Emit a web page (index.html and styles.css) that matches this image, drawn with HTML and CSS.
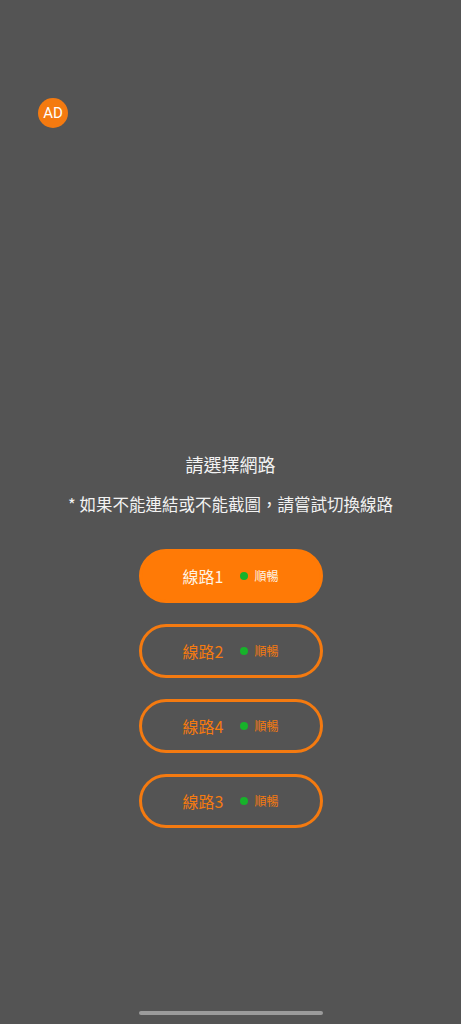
FILE: index.html
```html
<!DOCTYPE html>
<html lang="zh-Hant">
<head>
<meta charset="utf-8">
<title>請選擇網路</title>
<link rel="stylesheet" href="styles.css">
</head>
<body>
<div class="page">
  <header class="top">
    <div class="avatar">AD</div>
  </header>
  <main class="content">
    <h1 class="title">請選擇網路</h1>
    <p class="hint">* 如果不能連結或不能截圖，請嘗試切換線路</p>
    <div class="lines">
      <button class="line active"><span class="name">線路1</span><span class="dot"></span><span class="status">順暢</span></button>
      <button class="line"><span class="name">線路2</span><span class="dot"></span><span class="status">順暢</span></button>
      <button class="line"><span class="name">線路4</span><span class="dot"></span><span class="status">順暢</span></button>
      <button class="line"><span class="name">線路3</span><span class="dot"></span><span class="status">順暢</span></button>
    </div>
  </main>
  <footer class="bottom">
    <div class="home-bar"></div>
  </footer>
</div>
</body>
</html>
```
FILE: styles.css
```css
html, body {
  margin: 0;
  padding: 0;
  background: #545454;
}
body {
  font-family: "Noto Sans CJK TC", "Noto Sans", Roboto, sans-serif;
  color: #f2f2f2;
}
.page {
  height: 1024px;
  display: flex;
  flex-direction: column;
}
.top {
  padding: 98px 0 0 38px;
}
.avatar {
  width: 30px;
  height: 30px;
  border-radius: 50%;
  background: #f47a10;
  color: #ffffff;
  font-family: Roboto, "Noto Sans", sans-serif;
  font-size: 15px;
  display: flex;
  align-items: center;
  justify-content: center;
}
.content {
  margin-top: 324px;
  display: flex;
  flex-direction: column;
  align-items: center;
}
.title {
  margin: 0;
  font-size: 18px;
  font-weight: 400;
  line-height: 24px;
}
.hint {
  margin: 16px 0 0;
  font-size: 16.5px;
  line-height: 24px;
}
.lines {
  margin-top: 33px;
  display: flex;
  flex-direction: column;
  gap: 21px;
}
.line {
  width: 184px;
  height: 54px;
  border-radius: 27px;
  border: 3px solid #f47a10;
  background: transparent;
  color: #f47a10;
  display: flex;
  align-items: center;
  justify-content: center;
  padding: 0;
  font-family: "Noto Sans CJK TC", "Noto Sans", Roboto, sans-serif;
  cursor: pointer;
}
.line.active {
  background: #ff7a06;
  border-color: #ff7a06;
  color: #fff3e2;
}
.name {
  font-size: 16px;
  line-height: 20px;
}
.dot {
  width: 8px;
  height: 8px;
  border-radius: 50%;
  background: #17b22a;
  margin: 0 6px 0 17px;
}
.status {
  font-size: 12px;
  line-height: 16px;
}
.bottom {
  margin-top: auto;
  display: flex;
  justify-content: center;
  padding-bottom: 9px;
}
.home-bar {
  width: 184px;
  height: 4px;
  border-radius: 2px;
  background: #9b9b9b;
}
```
